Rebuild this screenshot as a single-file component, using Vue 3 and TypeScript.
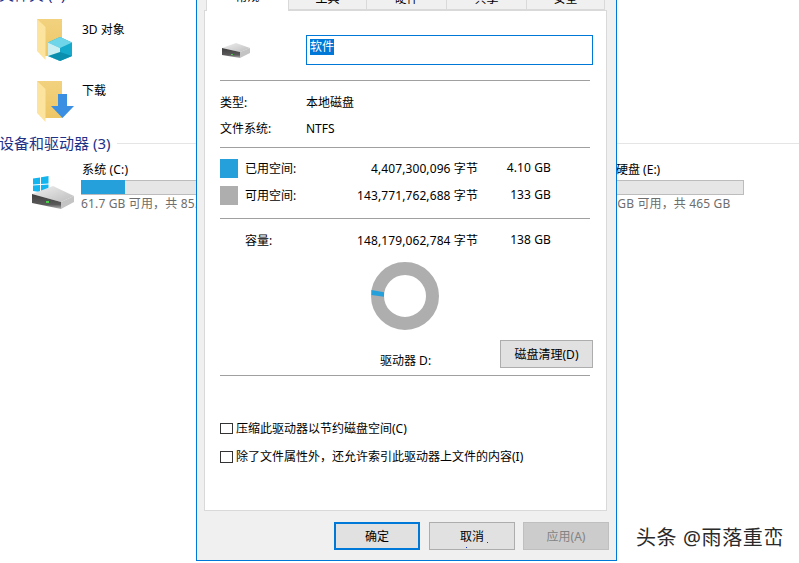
<script setup lang="ts">
interface Tab { label: string; active?: boolean }
const tabs: Tab[] = [
  { label: '常规', active: true },
  { label: '工具' },
  { label: '硬件' },
  { label: '共享' },
  { label: '安全' },
]
const usage = [
  { label: '已用空间:', bytes: '4,407,300,096 字节', size: '4.10 GB', color: '#26a0da' },
  { label: '可用空间:', bytes: '143,771,762,688 字节', size: '133 GB', color: '#aeaeae' },
]
</script>

<template>
  <div class="desktop">
    <main class="explorer">
      <h2 class="group-title first">文件夹 (7)</h2>
      <div class="folder-row">
        <svg class="folder-icon" width="40" height="46" viewBox="0 0 40 46">
          <defs>
            <linearGradient id="fb" x1="0" y1="0" x2="0" y2="1"><stop offset="0" stop-color="#f2d27f"/><stop offset="1" stop-color="#eec766"/></linearGradient>
            <linearGradient id="dtop" x1="0" y1="0" x2="1" y2="1"><stop offset="0" stop-color="#f0f0f0"/><stop offset="1" stop-color="#bdbdbd"/></linearGradient>
            <linearGradient id="dfront" x1="0" y1="0" x2="0" y2="1"><stop offset="0" stop-color="#3e3e3e"/><stop offset=".7" stop-color="#5a5a5a"/><stop offset="1" stop-color="#b8b8b8"/></linearGradient>
          </defs>
          <path d="M0 0H25V37H8z" fill="url(#fb)"/>
          <path d="M0 0L8.500 8V41L0 32z" fill="#fde49e"/>
          <path d="M23 18L35 23.500V37L23 42L11 37V23.500z" fill="#15a9cc"/>
          <path d="M23 18L35 23.500L23 29L11 23.500z" fill="#6ed6e8"/>
          <path d="M11 23.500L23 29V42L11 37z" fill="#c9eff3"/>
          <path d="M11 37L23 33L35 37L23 42z" fill="#0a8fae"/>
        </svg>
        <span class="folder-name">3D 对象</span>
      </div>
      <div class="folder-row">
        <svg class="folder-icon" width="40" height="46" viewBox="0 0 40 46">
          <path d="M0 0H25V37H8z" fill="url(#fb)"/>
          <path d="M0 0L8.500 8V41L0 32z" fill="#fde49e"/>
          <path d="M21 13H30V25H37L25.500 37L14 25H21z" fill="#3a8fe2"/>
        </svg>
        <span class="folder-name down">下载</span>
      </div>

      <div class="group-head">
        <h2 class="group-title">设备和驱动器 (3)</h2>
        <span class="group-line"></span>
      </div>

      <div class="drives">
        <div class="drive">
          <svg class="drive-icon" width="44" height="36" viewBox="0 0 44 36">
            <path d="M1 2.500L8 1.500V8L1 8.500zM9 1.300L16.500 0V7.500L9 8zM1 9.500L8 9V16L1 15zM9 9L16.500 8.500V17L9 16z" fill="#12b5ee"/>
            <path d="M0 18L21 10L42 20L29 26z" fill="url(#dtop)"/>
            <path d="M0 18L29 26V33L0 27z" fill="url(#dfront)"/>
            <path d="M29 26L42 20V26L29 33z" fill="#c4c4c4"/>
            <rect x="14" y="25" width="3" height="2" fill="#49d04a"/>
          </svg>
          <div class="drive-info">
            <div class="drive-name">系统 (C:)</div>
            <div class="bar"><div class="bar-fill" style="width: 29%"></div></div>
            <div class="drive-free">61.7 GB 可用，共 85.0 GB</div>
          </div>
        </div>
        <div class="drive third">
          <div class="drive-info">
            <div class="drive-name">本地硬盘 (E:)</div>
            <div class="bar"></div>
            <div class="drive-free">443 GB 可用，共 465 GB</div>
          </div>
        </div>
      </div>
    </main>

    <section class="dialog">
      <nav class="tabs">
        <div v-for="t in tabs" :key="t.label" class="tab" :class="{ active: t.active }">{{ t.label }}</div>
      </nav>
      <div class="panel">
        <div class="name-row">
          <svg class="small-drive" width="30" height="20" viewBox="0 0 30 20">
            <path d="M1 6L15 1L29 6L19 10z" fill="url(#dtop)"/>
            <path d="M1 6L19 10V16L1 13z" fill="url(#dfront)"/>
            <path d="M19 10L29 6V11L19 16z" fill="#c4c4c4"/>
            <rect x="10" y="12" width="2" height="1" fill="#49d04a"/>
          </svg>
          <div class="name-input"><span class="selection">软件</span></div>
        </div>
        <hr class="rule" />

        <div class="info-row type"><span class="key">类型:</span><span>本地磁盘</span></div>
        <div class="info-row fs"><span class="key">文件系统:</span><span>NTFS</span></div>
        <hr class="rule r2" />

        <div v-for="u in usage" :key="u.label" class="usage-row">
          <i class="swatch" :style="{ background: u.color }"></i>
          <span class="usage-label">{{ u.label }}</span>
          <span class="usage-bytes">{{ u.bytes }}</span>
          <span class="usage-size">{{ u.size }}</span>
        </div>
        <hr class="rule r3" />
        <div class="usage-row capacity">
          <i class="swatch blank"></i>
          <span class="usage-label">容量:</span>
          <span class="usage-bytes">148,179,062,784 字节</span>
          <span class="usage-size">138 GB</span>
        </div>

        <div class="chart-area">
          <svg class="donut" width="70" height="70" viewBox="0 0 70 70">
            <circle cx="35" cy="35" r="27.500" fill="none" stroke="#aeaeae" stroke-width="13"/>
            <path d="M1.400 29L14 31.300V35.700L1.400 34z" fill="#26a0da"/>
          </svg>
          <div class="drive-line">
            <span class="drive-label">驱动器 D:</span>
            <button class="btn clean">磁盘清理(D)</button>
          </div>
        </div>
        <hr class="rule r4" />

        <label class="check one"><i class="box"></i>压缩此驱动器以节约磁盘空间(C)</label>
        <label class="check two"><i class="box"></i>除了文件属性外，还允许索引此驱动器上文件的内容(I)</label>
      </div>

      <footer class="actions">
        <button class="btn ok">确定</button>
        <button class="btn cancel">取消<i class="dot d1"></i><i class="dot d2"></i></button>
        <button class="btn apply">应用(A)</button>
      </footer>
    </section>

    <div class="watermark">头条 @雨落重峦</div>
  </div>
</template>

<style>
html, body { margin: 0; background: #fff; }
</style>

<style scoped>
.desktop {
  position: relative;
  width: 799px;
  height: 563px;
  overflow: hidden;
  background: #fff;
  color: #000;
  font-family: "Noto Sans", "Noto Sans CJK SC", sans-serif;
  font-size: 12px;
}
.explorer { display: flex; flex-direction: column; }
.group-title {
  margin: 0 0 0 -1px;
  font-size: 15px;
  font-weight: 400;
  line-height: 20px;
  color: #1e3287;
  white-space: nowrap;
}
.group-title.first { margin-top: -16px; height: 35px; }
.folder-row {
  display: flex;
  height: 62px;
  padding-left: 37px;
  box-sizing: border-box;
}
.folder-icon { flex: none; }
.folder-name { margin-left: 5px; margin-top: 2px; line-height: 18px; }
.folder-name.down { margin-top: 1px; }
.group-head {
  display: flex;
  align-items: center;
  margin-top: -10px;
  height: 20px;
}
.group-line { flex: 1; height: 1px; background: #e5e5e5; margin-left: 7px; }
.drives {
  display: grid;
  grid-template-columns: repeat(3, 256px);
  padding-left: 32px;
  margin-top: 8px;
}
.drive { display: flex; position: relative; padding-left: 49px; }
.drive.third { grid-column: 3; }
.drive-icon { position: absolute; left: 0; top: 15px; }
.drive-info { width: 151px; }
.drive-name { line-height: 18px; height: 18px; white-space: nowrap; padding-left: 1px; letter-spacing: .15px; }
.third .drive-name { padding-left: 0; margin-left: -1px; letter-spacing: 0; }
.bar {
  height: 15px;
  box-sizing: border-box;
  border: 1px solid #bcbcbc;
  background: #e6e6e6;
  margin-top: 1px;
}
.bar-fill { height: 100%; background: #26a0da; margin: -1px 0 0 -1px; padding: 1px 0 0 1px; box-sizing: content-box; }
.drive-free { color: #6d6d6d; line-height: 18px; white-space: nowrap; letter-spacing: .15px; }

.dialog {
  position: absolute;
  left: 196px;
  top: -40px;
  width: 421px;
  height: 601px;
  box-sizing: border-box;
  border: 1px solid #0078d7;
  border-width: 0 1px 1px;
  background: #f0f0f0;
  padding: 0 9px 0 7px;
  display: flex;
  flex-direction: column;
}
.tabs {
  display: flex;
  height: 51px;
  align-items: flex-end;
  padding-left: 2px;
  position: relative;
  z-index: 1;
  margin-bottom: -1px;
}
.tab {
  width: 80px;
  height: 19px;
  box-sizing: border-box;
  border: 1px solid #d9d9d9;
  border-left-width: 0;
  text-align: center;
  line-height: 14px;
  color: #000;
  margin-bottom: 1px;
}
.tab.active {
  width: 83px;
  height: 22px;
  background: #fff;
  border-left-width: 1px;
  border-bottom: 0;
  margin-bottom: 0;
  line-height: 14px;
}
.tab:nth-child(2) { width: 78px; }
.tab:nth-child(5) { width: 78px; }
.panel {
  position: relative;
  height: 501px;
  flex: none;
  box-sizing: border-box;
  background: #fff;
  border: 1px solid #d9d9d9;
  padding: 24px 16px 0 15px;
  display: flex;
  flex-direction: column;
}
.name-row { display: flex; align-items: center; height: 30px; }
.small-drive { flex: none; margin-left: 1px; margin-top: 3px; }
.name-input {
  margin-left: 55px;
  width: 287px;
  height: 30px;
  box-sizing: border-box;
  border: 1px solid #0078d7;
  padding: 3px 0 0 3px;
  flex: none;
}
.selection { display: block; width: 24px; height: 16px; line-height: 15px; background: #0078d7; color: #fff; font-size: 12px; }
.rule { width: 370px; height: 1px; margin: 0; border: 0; background: #a0a0a0; flex: none; }
.name-row + .rule { margin-top: 15px; }
.info-row { display: flex; line-height: 18px; }
.info-row .key { width: 86px; }
.info-row.type { margin-top: 13px; }
.info-row.fs { margin-top: 8px; }
.r2 { margin-top: 9px; }
.usage-row {
  display: flex;
  align-items: center;
  height: 19px;
  margin-top: 8px;
  white-space: nowrap;
}
.r2 + .usage-row { margin-top: 11px; }
.swatch { width: 18px; height: 19px; flex: none; }
.swatch.blank { background: transparent; }
.usage-label, .usage-bytes, .usage-size { padding-bottom: 2px; }
.usage-label { margin-left: 7px; width: 60px; }
.usage-bytes { width: 173px; text-align: right; letter-spacing: .1px; }
.usage-size { width: 73px; text-align: right; letter-spacing: .1px; }
.r3 { margin-top: 13px; }
.capacity { margin-top: 12px; }
.chart-area { display: flex; flex-direction: column; height: 125px; position: relative; }
.donut { margin: 11px 0 0 150px; flex: none; }
.drive-line { display: flex; align-items: flex-start; margin-top: 9px; }
.drive-label { flex: none; width: 52px; margin-left: 160px; margin-top: 12px; line-height: 18px; white-space: nowrap; }
.btn {
  font: inherit;
  font-size: 12px;
  height: 28px;
  padding: 0;
  box-sizing: border-box;
  border: 1px solid #adadad;
  background: #e1e1e1;
  color: #000;
  position: relative;
}
.clean { flex: none; width: 93px; margin-left: 68px; }
.r4 { margin-top: 0; }
.check { display: flex; align-items: center; height: 16px; white-space: nowrap; }
.check.one { margin-top: 44px; }
.check.two { margin-top: 12px; }
.box { width: 13px; height: 11px; border: 1px solid #333; box-sizing: border-box; margin-right: 3px; flex: none; }
.check.two .box { height: 12px; margin-top: 1px; }
.actions { display: flex; gap: 9px; padding: 11px 0 0 130px; width: 403px; box-sizing: border-box; }
.actions .btn { width: 86px; flex: none; }
.ok { border: 2px solid #0078d7; }
.apply { background: #cccccc; border-color: #bfbfbf; color: #838383; margin-left: -1px; }
.dot { position: absolute; width: 1px; height: 1px; background: #1030d0; }
.d1 { left: 36px; top: 24px; }
.d2 { left: 57px; top: 19px; }
.watermark {
  position: absolute;
  right: 15px;
  top: 524px;
  font-size: 20px;
  letter-spacing: .6px;
  line-height: 28px;
  color: #2a2a2a;
  white-space: nowrap;
}
</style>
